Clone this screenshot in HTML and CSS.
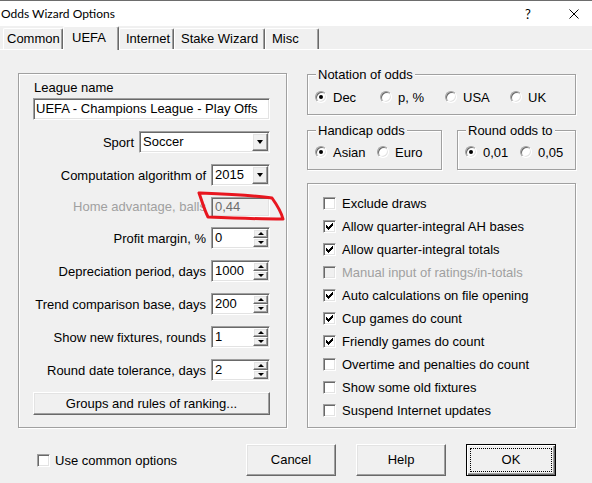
FILE: index.html
```html
<!DOCTYPE html>
<html lang="en">
<head>
    <meta charset="UTF-8">
    <title>Odds Wizard Options</title>
    <link rel="stylesheet" href="styles.css">
</head>
<body>
    <div class="titlebar">
        <span class="title">Odds Wizard Options</span>
        <span class="help">?</span>
        <svg class="close" width="10" height="10" viewBox="0 0 10 10">
            <path d="M0.5 0.5L9.5 9.5M9.5 0.5L0.5 9.5" stroke="#000" stroke-width="1" fill="none"/>
        </svg>
    </div>

    <div class="tabs">
        <div class="tab">Common</div>
        <div class="tab active">UEFA</div>
        <div class="tab">Internet</div>
        <div class="tab">Stake Wizard</div>
        <div class="tab">Misc</div>
    </div>

    <div class="page">
        <!-- league settings -->
        <div class="group league">
            <div class="caption">League name</div>
            <div class="edit">UEFA - Champions League - Play Offs</div>

            <div class="row">
                <span>Sport</span>
                <div class="edit combo sport"><span class="val">Soccer</span><span class="drop raised"></span></div>
            </div>
            <div class="row">
                <span>Computation algorithm of</span>
                <div class="edit combo"><span class="val">2015</span><span class="drop raised"></span></div>
            </div>
            <div class="row dim">
                <span>Home advantage, balls</span>
                <div class="edit off"><span class="val">0,44</span></div>
            </div>
            <div class="row">
                <span>Profit margin, %</span>
                <div class="edit"><span class="val">0</span><span class="updown"><b class="raised up"></b><b class="raised down"></b></span></div>
            </div>
            <div class="row">
                <span>Depreciation period, days</span>
                <div class="edit"><span class="val">1000</span><span class="updown"><b class="raised up"></b><b class="raised down"></b></span></div>
            </div>
            <div class="row">
                <span>Trend comparison base, days</span>
                <div class="edit"><span class="val">200</span><span class="updown"><b class="raised up"></b><b class="raised down"></b></span></div>
            </div>
            <div class="row">
                <span>Show new fixtures, rounds</span>
                <div class="edit"><span class="val">1</span><span class="updown"><b class="raised up"></b><b class="raised down"></b></span></div>
            </div>
            <div class="row">
                <span>Round date tolerance, days</span>
                <div class="edit"><span class="val">2</span><span class="updown"><b class="raised up"></b><b class="raised down"></b></span></div>
            </div>

            <div class="btn raised ranking">Groups and rules of ranking...</div>
        </div>

        <!-- odds settings -->
        <div class="side">
            <fieldset class="notation">
                <legend>Notation of odds</legend>
                <div class="opts">
                    <span class="opt"><i class="radio on"></i>Dec</span>
                    <span class="opt"><i class="radio"></i>p, %</span>
                    <span class="opt"><i class="radio"></i>USA</span>
                    <span class="opt"><i class="radio"></i>UK</span>
                </div>
            </fieldset>

            <div class="pair">
                <fieldset class="handicap">
                    <legend>Handicap odds</legend>
                    <div class="opts">
                        <span class="opt"><i class="radio on"></i>Asian</span>
                        <span class="opt"><i class="radio"></i>Euro</span>
                    </div>
                </fieldset>
                <fieldset class="rounding">
                    <legend>Round odds to</legend>
                    <div class="opts">
                        <span class="opt"><i class="radio on"></i>0,01</span>
                        <span class="opt"><i class="radio"></i>0,05</span>
                    </div>
                </fieldset>
            </div>

            <div class="group flags">
                <div class="check"><i class="box"></i>Exclude draws</div>
                <div class="check"><i class="box"><svg width="7" height="7" viewBox="0 0 7 7"><path d="M0 2h1v1h1v1h1v-1h1v-1h1v-1h1v-1h1v3h-1v1h-1v1h-1v1h-1v1h-1v-1h-1v-1h-1z"/></svg></i>Allow quarter-integral AH bases</div>
                <div class="check"><i class="box"><svg width="7" height="7" viewBox="0 0 7 7"><path d="M0 2h1v1h1v1h1v-1h1v-1h1v-1h1v-1h1v3h-1v1h-1v1h-1v1h-1v1h-1v-1h-1v-1h-1z"/></svg></i>Allow quarter-integral totals</div>
                <div class="check disabled"><i class="box"></i>Manual input of ratings/in-totals</div>
                <div class="check"><i class="box"><svg width="7" height="7" viewBox="0 0 7 7"><path d="M0 2h1v1h1v1h1v-1h1v-1h1v-1h1v-1h1v3h-1v1h-1v1h-1v1h-1v1h-1v-1h-1v-1h-1z"/></svg></i>Auto calculations on file opening</div>
                <div class="check"><i class="box"><svg width="7" height="7" viewBox="0 0 7 7"><path d="M0 2h1v1h1v1h1v-1h1v-1h1v-1h1v-1h1v3h-1v1h-1v1h-1v1h-1v1h-1v-1h-1v-1h-1z"/></svg></i>Cup games do count</div>
                <div class="check"><i class="box"><svg width="7" height="7" viewBox="0 0 7 7"><path d="M0 2h1v1h1v1h1v-1h1v-1h1v-1h1v-1h1v3h-1v1h-1v1h-1v1h-1v1h-1v-1h-1v-1h-1z"/></svg></i>Friendly games do count</div>
                <div class="check"><i class="box"></i>Overtime and penalties do count</div>
                <div class="check"><i class="box"></i>Show some old fixtures</div>
                <div class="check"><i class="box"></i>Suspend Internet updates</div>
            </div>
        </div>
    </div>

    <div class="footer">
        <div class="check"><i class="box"></i>Use common options</div>
        <div class="buttons">
            <div class="btn raised">Cancel</div>
            <div class="btn raised">Help</div>
            <div class="btn default"><span class="focus">OK</span></div>
        </div>
    </div>

    <!-- red marker loop around the home advantage field -->
    <svg class="marker" width="592" height="483" viewBox="0 0 592 483">
        <path d="M199 193C225 194 252 195 272 198C277 205 281 211 283 219C258 219 232 218 208 217C204 209 202 201 199 193Z" fill="none" stroke="#e8161f" stroke-width="3" stroke-linejoin="round"/>
    </svg>
</body>
</html>
```

FILE: styles.css
```css
* {
    box-sizing: border-box;
}
body {
    margin: 0;
    width: 592px;
    height: 483px;
    overflow: hidden;
    position: relative;
    background-color: #f0f0f0;
    font-family: "Liberation Sans", Arial, sans-serif;
    font-size: 13px;
    color: #000;
}

/* window caption */
.titlebar {
    height: 26px;
    border-top: 1px solid #6d6d6d;
    background-color: #fff;
    display: flex;
    align-items: center;
}
.titlebar .title {
    flex: 1;
    padding-left: 1px;
    font-family: Lato, "Liberation Sans", sans-serif;
    font-size: 12px;
}
.titlebar .help {
    width: 8px;
    text-align: center;
    margin-right: 37px;
    font-family: Lato, "Liberation Sans", sans-serif;
    font-size: 13px;
}
.titlebar .close {
    margin-right: 13px;
}

/* tab strip */
.tabs {
    display: flex;
    align-items: flex-end;
    height: 24px;
    padding-left: 3px;
    border-bottom: 1px solid #fff;
}
.tab {
    height: 21px;
    line-height: 20px;
    padding-left: 6px;
    border-top: 1px solid #fff;
    border-left: 1px solid #fff;
    border-right: 1px solid #696969;
    border-radius: 2px 2px 0 0;
    box-shadow: inset -1px 0 0 #a0a0a0;
    white-space: nowrap;
}
.tab:nth-child(1) { width: 60px; padding-left: 3px; }
.tab:nth-child(2) { width: 56px; }
.tab:nth-child(3) { width: 55px; }
.tab:nth-child(4) { width: 91px; }
.tab:nth-child(5) { width: 54px; }
.tab.active {
    height: 24px;
    margin-bottom: -1px;
    padding-top: 2px;
    padding-left: 8px;
    line-height: 17px;
    background-color: #f0f0f0;
}

/* page layout */
.page {
    display: flex;
    align-items: flex-start;
    gap: 20px;
    padding: 17px 0 0 18px;
}
.group {
    border: 1px solid #a0a0a0;
    box-shadow: inset 1px 1px 0 #fff, 1px 1px 0 #fff;
}
.league {
    width: 269px;
    height: 355px;
    margin-top: 6px;
    padding: 6px 16px 0 14px;
}
.league .caption {
    padding-left: 1px;
    line-height: 15px;
    margin-bottom: 3px;
}

/* sunken edit fields */
.edit {
    display: flex;
    height: 22px;
    padding-left: 2px;
    line-height: 20px;
    background-color: #fff;
    border: 1px solid;
    border-color: #a0a0a0 #fff #fff #a0a0a0;
    box-shadow: inset 1px 1px 0 #696969, inset -1px -1px 0 #e3e3e3;
    white-space: nowrap;
}
.edit .val {
    flex: 1;
    padding-left: 1px;
}
.edit.off {
    background-color: #f0f0f0;
    color: #6d6d6d;
}

.raised {
    background-color: #f0f0f0;
    border: 1px solid;
    border-color: #fff #696969 #696969 #fff;
    box-shadow: inset -1px -1px 0 #a0a0a0, inset 1px 1px 0 #e3e3e3;
}

.row {
    display: flex;
    justify-content: flex-end;
    align-items: center;
    gap: 5px;
    height: 22px;
    margin-top: 11px;
    white-space: nowrap;
}
.row .edit {
    width: 59px;
}
.row .edit.sport {
    width: 131px;
}
.row.dim {
    height: 19px;
    color: #a0a0a0;
}
.row.dim .edit {
    height: 20px;
    line-height: 18px;
}

/* combo drop button */
.drop {
    width: 16px;
    margin: 1px;
    display: flex;
    align-items: center;
    justify-content: center;
}
.drop::after {
    content: "";
    border-top: 4px solid #000;
    border-left: 3.5px solid transparent;
    border-right: 3.5px solid transparent;
}

/* spin buttons */
.updown {
    width: 15px;
    margin: 1px;
    display: flex;
    flex-direction: column;
}
.updown b {
    flex: 1;
    display: flex;
    align-items: center;
    justify-content: center;
}
.updown .up::after {
    content: "";
    border-bottom: 3px solid #000;
    border-left: 3px solid transparent;
    border-right: 3px solid transparent;
}
.updown .down::after {
    content: "";
    border-top: 3px solid #000;
    border-left: 3px solid transparent;
    border-right: 3px solid transparent;
}

.btn {
    height: 23px;
    line-height: 21px;
    text-align: center;
}
.ranking {
    margin-top: 11px;
}

/* right column */
.side {
    width: 269px;
}
fieldset {
    margin: 0;
    padding: 0 0 0 7px;
    min-width: 0;
    border: 1px solid #a0a0a0;
    box-shadow: inset 1px 1px 0 #fff, 1px 1px 0 #fff;
}
legend {
    margin-left: 1px;
    padding: 0 2px;
    line-height: 15px;
    background-color: #f0f0f0;
}
.opts {
    display: flex;
    align-items: center;
    height: 16px;
}
.notation .opts {
    margin: 7px 0 9px;
}
.notation .opt { width: 65px; }
.pair {
    display: flex;
    gap: 15px;
    margin-top: 8px;
}
.pair .opts {
    margin: 6px 0 9px;
}
.handicap {
    width: 135px;
}
.handicap .opt { width: 62px; }
.rounding {
    width: 119px;
}
.rounding .opt { width: 56px; }
.opt {
    display: flex;
    align-items: center;
    gap: 6px;
    white-space: nowrap;
}
.radio {
    width: 12px;
    height: 12px;
    border-radius: 50%;
    background-color: #fff;
    border: 1px solid;
    border-color: #a0a0a0 #fff #fff #a0a0a0;
    box-shadow: inset 1px 1px 0 #696969, inset -1px -1px 0 #e3e3e3;
    display: flex;
    align-items: center;
    justify-content: center;
}
.radio.on::after {
    content: "";
    width: 4px;
    height: 4px;
    border-radius: 50%;
    background-color: #000;
}

.flags {
    height: 245px;
    margin-top: 13px;
    padding: 8px 0 0 15px;
}
.check {
    display: flex;
    align-items: center;
    gap: 6px;
    height: 23px;
    white-space: nowrap;
}
.box {
    width: 13px;
    height: 13px;
    flex-shrink: 0;
    background-color: #fff;
    border: 1px solid;
    border-color: #a0a0a0 #fff #fff #a0a0a0;
    box-shadow: inset 1px 1px 0 #696969, inset -1px -1px 0 #e3e3e3;
    display: flex;
    align-items: center;
    justify-content: center;
}
.check.disabled {
    color: #a0a0a0;
}
.check.disabled .box {
    background-color: #f0f0f0;
}

/* bottom bar */
.footer {
    display: flex;
    align-items: center;
    height: 32px;
    margin-top: 16px;
    padding: 0 36px 0 37px;
}
.footer .check {
    gap: 5px;
}
.buttons {
    margin-left: auto;
    display: flex;
    gap: 20px;
}
.buttons .btn {
    width: 90px;
    height: 32px;
    line-height: 30px;
}
.btn.default {
    border: 1px solid #000;
    box-shadow: inset 1px 1px 0 #fff, inset -1px -1px 0 #696969, inset -2px -2px 0 #a0a0a0;
    padding: 3px;
}
.btn.default .focus {
    display: block;
    height: 24px;
    line-height: 22px;
    border: 1px dotted #000;
}

.marker {
    position: absolute;
    left: 0;
    top: 0;
    pointer-events: none;
}
```
